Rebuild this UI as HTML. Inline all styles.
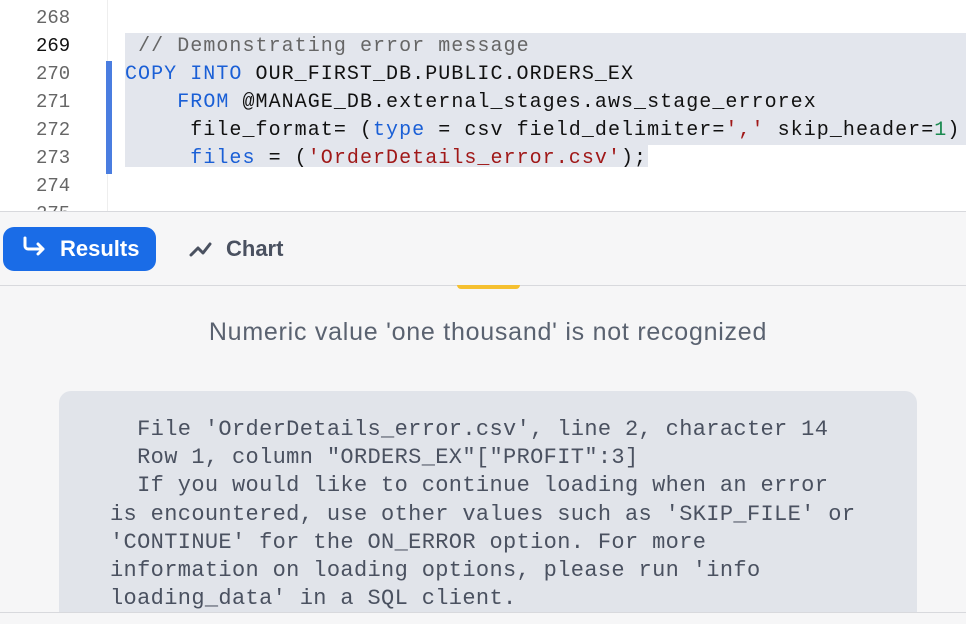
<!DOCTYPE html>
<html style="width:966px;height:624px;overflow:hidden"><head><meta charset="utf-8"><style>
*{margin:0;padding:0;box-sizing:border-box}
body{width:966px;height:624px;overflow:hidden;background:#fff;font-family:"Liberation Sans",sans-serif;position:relative}
.ln{position:absolute;left:36px;font:19px "Liberation Mono",monospace;color:#666;line-height:28px}
.code{position:absolute;left:125px;font:20px "Liberation Mono",monospace;letter-spacing:1.05px;color:#111;white-space:pre;line-height:28px}
.k{color:#1a5fd6}.s{color:#a01818}.n{color:#1a8a50}.c{color:#666}
.err{position:absolute;left:59px;top:391px;width:858px;height:221px;background:#e1e4ea;border-radius:12px 12px 0 0}
.et{position:absolute;left:110px;top:416px;font:22px "Liberation Mono",monospace;letter-spacing:0.35px;color:#4a5160;white-space:pre;line-height:28.2px}
</style></head><body>
<div style="position:absolute;left:107px;top:0;width:1px;height:211px;background:#eee"></div>
<div style="position:absolute;left:125px;top:33px;width:841px;height:112px;background:#e3e6ed"></div>
<div style="position:absolute;left:125px;top:145px;width:523px;height:22px;background:#e3e6ed"></div>
<div style="position:absolute;left:106px;top:61px;width:6px;height:113px;background:#4a7de0"></div>
<div class="ln" style="top:4px">268<br><span style="color:#111">269</span><br>270<br>271<br>272<br>273<br>274<br>275</div>
<div class="code" style="top:33px"> <span class="c">// Demonstrating error message</span>
<span class="k">COPY INTO</span> OUR_FIRST_DB.PUBLIC.ORDERS_EX
    <span class="k">FROM</span> @MANAGE_DB.external_stages.aws_stage_errorex
     file_format= (<span class="k">type</span> = csv field_delimiter=<span class="s">','</span> skip_header=<span class="n">1</span>)
     <span class="k">files</span> = (<span class="s">'OrderDetails_error.csv'</span>);</div>
<div style="position:absolute;left:0;top:211px;width:966px;height:413px;background:#f6f6f7;border-top:1px solid #d8d9dd"></div>
<div style="position:absolute;left:0;top:285px;width:966px;height:1px;background:#d8d9dd"></div>
<div style="position:absolute;left:457px;top:285px;width:63px;height:4px;background:#f5c030;border-radius:0 0 4px 4px"></div>
<div style="position:absolute;left:3px;top:227px;width:153px;height:44px;background:#1a6ce7;border-radius:11px;color:#fff;font-weight:bold;font-size:22px;line-height:44px;padding-left:57px">Results</div>
<svg style="position:absolute;left:22px;top:236px" width="26" height="22" viewBox="0 0 26 22"><path d="M3 2v8a3 3 0 0 0 3 3h15M16 8l5 5-5 5" fill="none" stroke="#fff" stroke-width="3" stroke-linecap="round" stroke-linejoin="round"/></svg>
<svg style="position:absolute;left:189px;top:240px" width="24" height="18" viewBox="0 0 24 18"><path d="M2 15l7-7 5 5 7-9" fill="none" stroke="#4a5160" stroke-width="3" stroke-linecap="round" stroke-linejoin="round"/></svg>
<div style="position:absolute;left:226px;top:236px;font-weight:bold;font-size:22px;color:#4a5160">Chart</div>
<div style="position:absolute;left:0;width:976px;top:318px;text-align:center;font-size:25px;letter-spacing:0.75px;color:#5a6270">Numeric value 'one thousand' is not recognized</div>
<div class="err"></div>
<div class="et">  File 'OrderDetails_error.csv', line 2, character 14
  Row 1, column "ORDERS_EX"["PROFIT":3]
  If you would like to continue loading when an error
is encountered, use other values such as 'SKIP_FILE' or
'CONTINUE' for the ON_ERROR option. For more
information on loading options, please run 'info
loading_data' in a SQL client.</div>
<div style="position:absolute;left:0;top:612px;width:966px;height:12px;background:#f6f6f7;border-top:1px solid #d8d9dd"></div>
</body></html>
